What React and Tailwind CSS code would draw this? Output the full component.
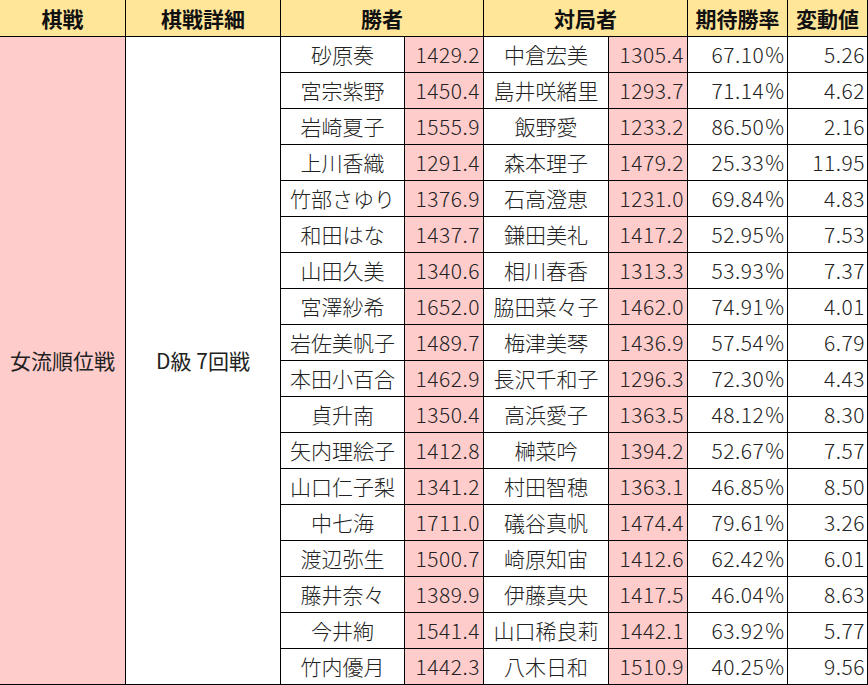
import React from "react";

const rows = [
  ["砂原奏", "1429.2", "中倉宏美", "1305.4", "67.10", "5.26"],
  ["宮宗紫野", "1450.4", "島井咲緒里", "1293.7", "71.14", "4.62"],
  ["岩崎夏子", "1555.9", "飯野愛", "1233.2", "86.50", "2.16"],
  ["上川香織", "1291.4", "森本理子", "1479.2", "25.33", "11.95"],
  ["竹部さゆり", "1376.9", "石高澄恵", "1231.0", "69.84", "4.83"],
  ["和田はな", "1437.7", "鎌田美礼", "1417.2", "52.95", "7.53"],
  ["山田久美", "1340.6", "相川春香", "1313.3", "53.93", "7.37"],
  ["宮澤紗希", "1652.0", "脇田菜々子", "1462.0", "74.91", "4.01"],
  ["岩佐美帆子", "1489.7", "梅津美琴", "1436.9", "57.54", "6.79"],
  ["本田小百合", "1462.9", "長沢千和子", "1296.3", "72.30", "4.43"],
  ["貞升南", "1350.4", "高浜愛子", "1363.5", "48.12", "8.30"],
  ["矢内理絵子", "1412.8", "榊菜吟", "1394.2", "52.67", "7.57"],
  ["山口仁子梨", "1341.2", "村田智穂", "1363.1", "46.85", "8.50"],
  ["中七海", "1711.0", "礒谷真帆", "1474.4", "79.61", "3.26"],
  ["渡辺弥生", "1500.7", "崎原知宙", "1412.6", "62.42", "6.01"],
  ["藤井奈々", "1389.9", "伊藤真央", "1417.5", "46.04", "8.63"],
  ["今井絢", "1541.4", "山口稀良莉", "1442.1", "63.92", "5.77"],
  ["竹内優月", "1442.3", "八木日和", "1510.9", "40.25", "9.56"],
];

const head = "bg-[#ffe699] flex items-center justify-center font-bold text-[21px] text-[#111]";
const name = "bg-white flex items-center justify-center whitespace-nowrap font-light";
const rate = "bg-[#ffcccc] flex items-center justify-end pr-[3px] font-light tracking-[0.5px]";
const num = "bg-white flex items-center justify-end pr-[3px] font-light tracking-[0.5px]";

export default function App() {
  return (
    <div
      className="w-[868px] h-[685px] bg-white"
      style={{ fontFamily: '"Noto Sans CJK JP", "Noto Sans", sans-serif' }}
    >
      <div className="grid grid-cols-[125px_154px_123px_78px_124px_78px_99px_79px] grid-rows-[36px_repeat(18,35px)] gap-px bg-black pr-px pb-px text-[21px] text-[#222] leading-none">
        <div className={head}>棋戦</div>
        <div className={head}>棋戦詳細</div>
        <div className={`${head} col-span-2`}>勝者</div>
        <div className={`${head} col-span-2`}>対局者</div>
        <div className={head}>期待勝率</div>
        <div className={head}>変動値</div>
        <div className="bg-[#ffcccc] row-span-18 flex items-center justify-center">女流順位戦</div>
        <div className="bg-white row-span-18 flex items-center justify-center">D級 7回戦</div>
        {rows.map((r, i) => (
          <React.Fragment key={i}>
            <div className={name}>{r[0]}</div>
            <div className={rate}>{r[1]}</div>
            <div className={name}>{r[2]}</div>
            <div className={rate}>{r[3]}</div>
            <div className={num}>
              {r[4]}
              <span className="ml-[1px] tracking-normal">%</span>
            </div>
            <div className="bg-white flex items-center justify-end pr-[2px] font-light tracking-[0.5px]">{r[5]}</div>
          </React.Fragment>
        ))}
      </div>
    </div>
  );
}
